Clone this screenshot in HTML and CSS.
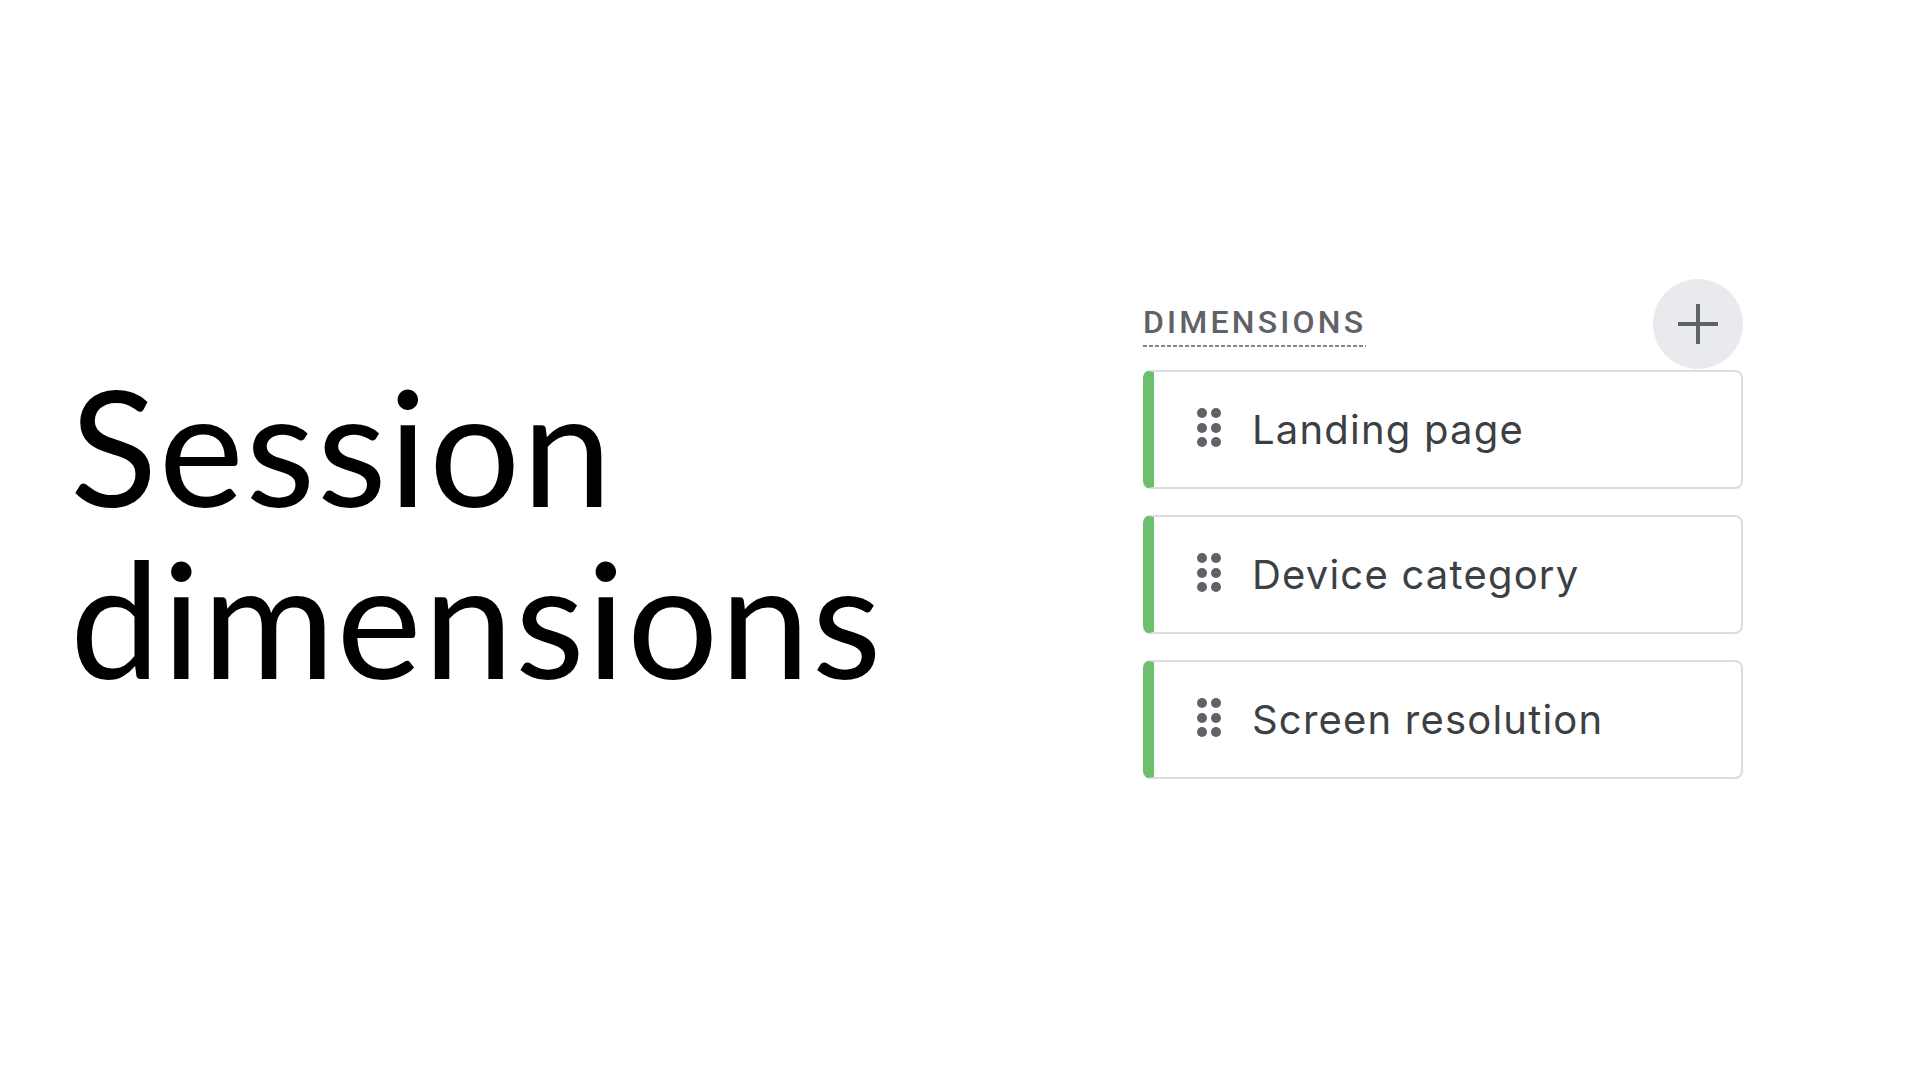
FILE: index.html
```html
<!DOCTYPE html>
<html>
<head>
<meta charset="utf-8">
<link rel="stylesheet" href="styles.css">
</head>
<body>
<div class="slide">
  <h1 class="title">Session<br>dimensions</h1>
  <div class="panel">
    <div class="panel-head">
      <span class="label">DIMENSIONS</span>
      <div class="add-btn">
        <svg width="42" height="42" viewBox="0 0 42 42"><path d="M21 1v40M1 21h40" stroke="#5f6368" stroke-width="4" fill="none"/></svg>
      </div>
    </div>
    <div class="cards">
      <div class="card">
        <span class="handle"><i></i><i></i><i></i><i></i><i></i><i></i></span>
        <span class="card-text">Landing page</span>
      </div>
      <div class="card">
        <span class="handle"><i></i><i></i><i></i><i></i><i></i><i></i></span>
        <span class="card-text">Device category</span>
      </div>
      <div class="card">
        <span class="handle"><i></i><i></i><i></i><i></i><i></i><i></i></span>
        <span class="card-text">Screen resolution</span>
      </div>
    </div>
  </div>
</div>
</body>
</html>
```

FILE: styles.css
```css
* { box-sizing: border-box; }
html, body { margin: 0; padding: 0; background: #fff; }
.slide {
  width: 1920px;
  height: 1080px;
  display: flex;
  align-items: center;
  padding: 0 0 22px 70px;
}
.title {
  margin: 0 0 -4px 0;
  width: 1073px;
  font-family: "Lato", sans-serif;
  font-weight: 400;
  font-size: 161px;
  line-height: 172px;
  letter-spacing: 1.8px;
  color: #000;
}
.panel {
  width: 600px;
  display: flex;
  flex-direction: column;
}
.panel-head {
  display: flex;
  justify-content: space-between;
  align-items: center;
  height: 90px;
  margin-bottom: 1px;
}
.label {
  font-family: "Roboto", sans-serif;
  font-weight: 500;
  font-size: 32px;
  letter-spacing: 3.2px;
  color: #5f6368;
  line-height: 36px;
  padding-bottom: 7px;
  margin-top: 2px;
  background-image: linear-gradient(to right, #80868b 60%, transparent 60%);
  background-size: 6px 2px;
  background-repeat: repeat-x;
  background-position: left bottom;
}
.add-btn {
  width: 90px;
  height: 90px;
  border-radius: 50%;
  background: #e8eaed;
  display: flex;
  align-items: center;
  justify-content: center;
}
.cards {
  display: flex;
  flex-direction: column;
  gap: 26px;
}
.card {
  height: 119px;
  border: 2px solid #dadce0;
  border-left: 11px solid #6cbf6f;
  border-radius: 8px;
  display: flex;
  align-items: center;
  padding-left: 43px;
}
.handle {
  display: grid;
  grid-template-columns: 10px 10px;
  gap: 4.5px 4px;
  margin-right: 31px;
  margin-top: -4px;
}
.handle i {
  display: block;
  width: 10px;
  height: 10px;
  border-radius: 50%;
  background: #5f6368;
}
.card-text {
  font-family: "Inter", sans-serif;
  font-size: 40px;
  letter-spacing: 1.2px;
  color: #3c4043;
}
```
